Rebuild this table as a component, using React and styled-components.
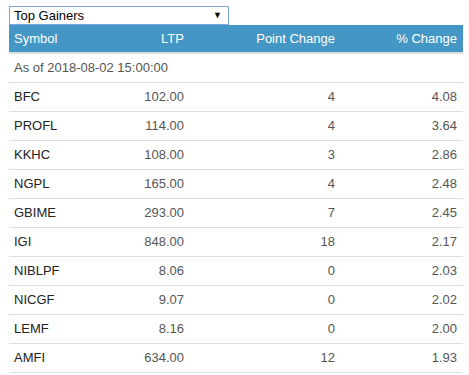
import React from "react";
import styled, { createGlobalStyle } from "styled-components";

const rows = [
  { symbol: "BFC", ltp: "102.00", point: "4", pct: "4.08" },
  { symbol: "PROFL", ltp: "114.00", point: "4", pct: "3.64" },
  { symbol: "KKHC", ltp: "108.00", point: "3", pct: "2.86" },
  { symbol: "NGPL", ltp: "165.00", point: "4", pct: "2.48" },
  { symbol: "GBIME", ltp: "293.00", point: "7", pct: "2.45" },
  { symbol: "IGI", ltp: "848.00", point: "18", pct: "2.17" },
  { symbol: "NIBLPF", ltp: "8.06", point: "0", pct: "2.03" },
  { symbol: "NICGF", ltp: "9.07", point: "0", pct: "2.02" },
  { symbol: "LEMF", ltp: "8.16", point: "0", pct: "2.00" },
  { symbol: "AMFI", ltp: "634.00", point: "12", pct: "1.93" },
];

function App() {
  return (
    <>
      <GlobalStyle />
      <Wrapper>
        <Select>
          <span>Top Gainers</span>
          <Arrow>▼</Arrow>
        </Select>
        <Table>
          <colgroup>
            <col style={{ width: 90 }} />
            <col style={{ width: 91 }} />
            <col style={{ width: 151 }} />
            <col />
          </colgroup>
          <thead>
            <tr>
              <Th>Symbol</Th>
              <Th $right>LTP</Th>
              <Th $right>Point Change</Th>
              <Th $right>% Change</Th>
            </tr>
          </thead>
          <tbody>
            <tr>
              <Td colSpan={4}>As of 2018-08-02 15:00:00</Td>
            </tr>
            {rows.map((row) => (
              <tr key={row.symbol}>
                <Td $strong>{row.symbol}</Td>
                <Td $right>{row.ltp}</Td>
                <Td $right>{row.point}</Td>
                <Td $right>{row.pct}</Td>
              </tr>
            ))}
          </tbody>
        </Table>
      </Wrapper>
    </>
  );
}

export default App;

const GlobalStyle = createGlobalStyle`
  body {
    margin: 0;
    background: #fff;
    font-family: "Liberation Sans", Arial, sans-serif;
    font-size: 13px;
    color: #333;
  }
`;

const Wrapper = styled.div`
  padding: 6px 6px 0 9px;
`;

const Select = styled.div`
  box-sizing: border-box;
  width: 220px;
  height: 19px;
  border: 1px solid #7ea6dc;
  display: flex;
  align-items: center;
  justify-content: space-between;
  padding: 0 6px 0 4px;
  color: #000;
  font-size: 13px;
  line-height: 17px;
`;

const Arrow = styled.span`
  font-size: 9px;
  color: #000;
`;

const Table = styled.table`
  width: 454px;
  border-collapse: collapse;
  table-layout: fixed;
`;

const Th = styled.th`
  background: #4496c4;
  color: #fff;
  font-weight: normal;
  text-align: ${(p) => (p.$right ? "right" : "left")};
  padding: 5px 6px 4px 5px;
  height: 27px;
  box-sizing: border-box;
  line-height: 18px;
  border-bottom: 2px solid #ddd;
`;

const Td = styled.td`
  text-align: ${(p) => (p.$right ? "right" : "left")};
  padding: 5px 6px 5px 5px;
  line-height: 18px;
  border-bottom: 1px solid #ddd;
  color: ${(p) => (p.$strong ? "#222" : "#555")};
  white-space: nowrap;
`;
